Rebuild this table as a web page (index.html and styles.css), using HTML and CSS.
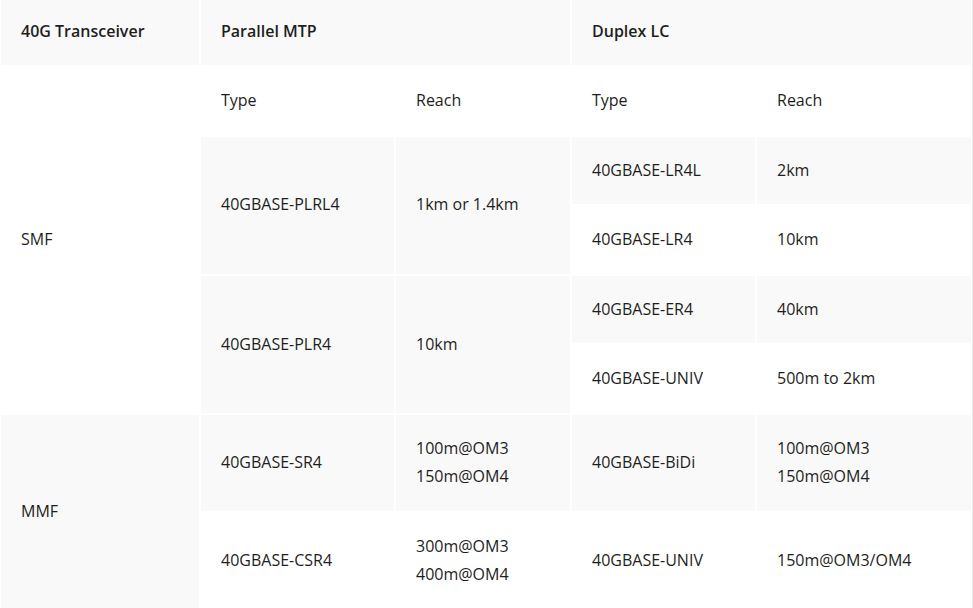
FILE: index.html
```html
<!DOCTYPE html>
<html lang="en">
<head>
<meta charset="utf-8">
<title>40G Transceiver</title>
<link rel="stylesheet" href="styles.css">
</head>
<body>
<div class="frame">
<table class="spec">
  <colgroup>
    <col class="c1"><col class="c2"><col class="c3"><col class="c4"><col class="c5">
  </colgroup>
  <tr class="head">
    <th>40G Transceiver</th>
    <th colspan="2">Parallel MTP</th>
    <th colspan="2">Duplex LC</th>
  </tr>
  <tr>
    <td rowspan="5">SMF</td>
    <td>Type</td><td>Reach</td><td>Type</td><td>Reach</td>
  </tr>
  <tr>
    <td rowspan="2">40GBASE-PLRL4</td><td rowspan="2">1km or 1.4km</td>
    <td>40GBASE-LR4L</td><td>2km</td>
  </tr>
  <tr>
    <td>40GBASE-LR4</td><td>10km</td>
  </tr>
  <tr>
    <td rowspan="2">40GBASE-PLR4</td><td rowspan="2">10km</td>
    <td>40GBASE-ER4</td><td>40km</td>
  </tr>
  <tr>
    <td>40GBASE-UNIV</td><td>500m to 2km</td>
  </tr>
  <tr>
    <td rowspan="2">MMF</td>
    <td>40GBASE-SR4</td><td>100m@OM3<br>150m@OM4</td>
    <td>40GBASE-BiDi</td><td>100m@OM3<br>150m@OM4</td>
  </tr>
  <tr>
    <td>40GBASE-CSR4</td><td>300m@OM3<br>400m@OM4</td>
    <td>40GBASE-UNIV</td><td>150m@OM3/OM4</td>
  </tr>
</table>
</div>
</body>
</html>
```
FILE: styles.css
```css
html, body {
  margin: 0;
  padding: 0;
  background: #fff;
  overflow: hidden;
}
.frame {
  width: 975px;
  box-sizing: border-box;
  margin: -3px 0 0 -2px;
  border: 1px solid #ececec;
}
.spec {
  width: 100%;
  table-layout: fixed;
  border-collapse: separate;
  border-spacing: 2px;
  font-family: "Open Sans", "Noto Sans", sans-serif;
  font-size: 16px;
  line-height: 28px;
  color: #1e1e1e;
}
.c1 { width: 198px; }
.c2 { width: 193px; }
.c3 { width: 174px; }
.c4 { width: 183px; }
.c5 { width: 214px; }
.spec th, .spec td {
  padding: 19px 20px 20.6px;
  text-align: left;
  vertical-align: middle;
  background: #fff;
}
.spec th {
  font-weight: 600;
  padding: 17px 20px 20px;
}
.spec tr:nth-child(odd) th,
.spec tr:nth-child(odd) td {
  background: #f9f9f9;
}
```
